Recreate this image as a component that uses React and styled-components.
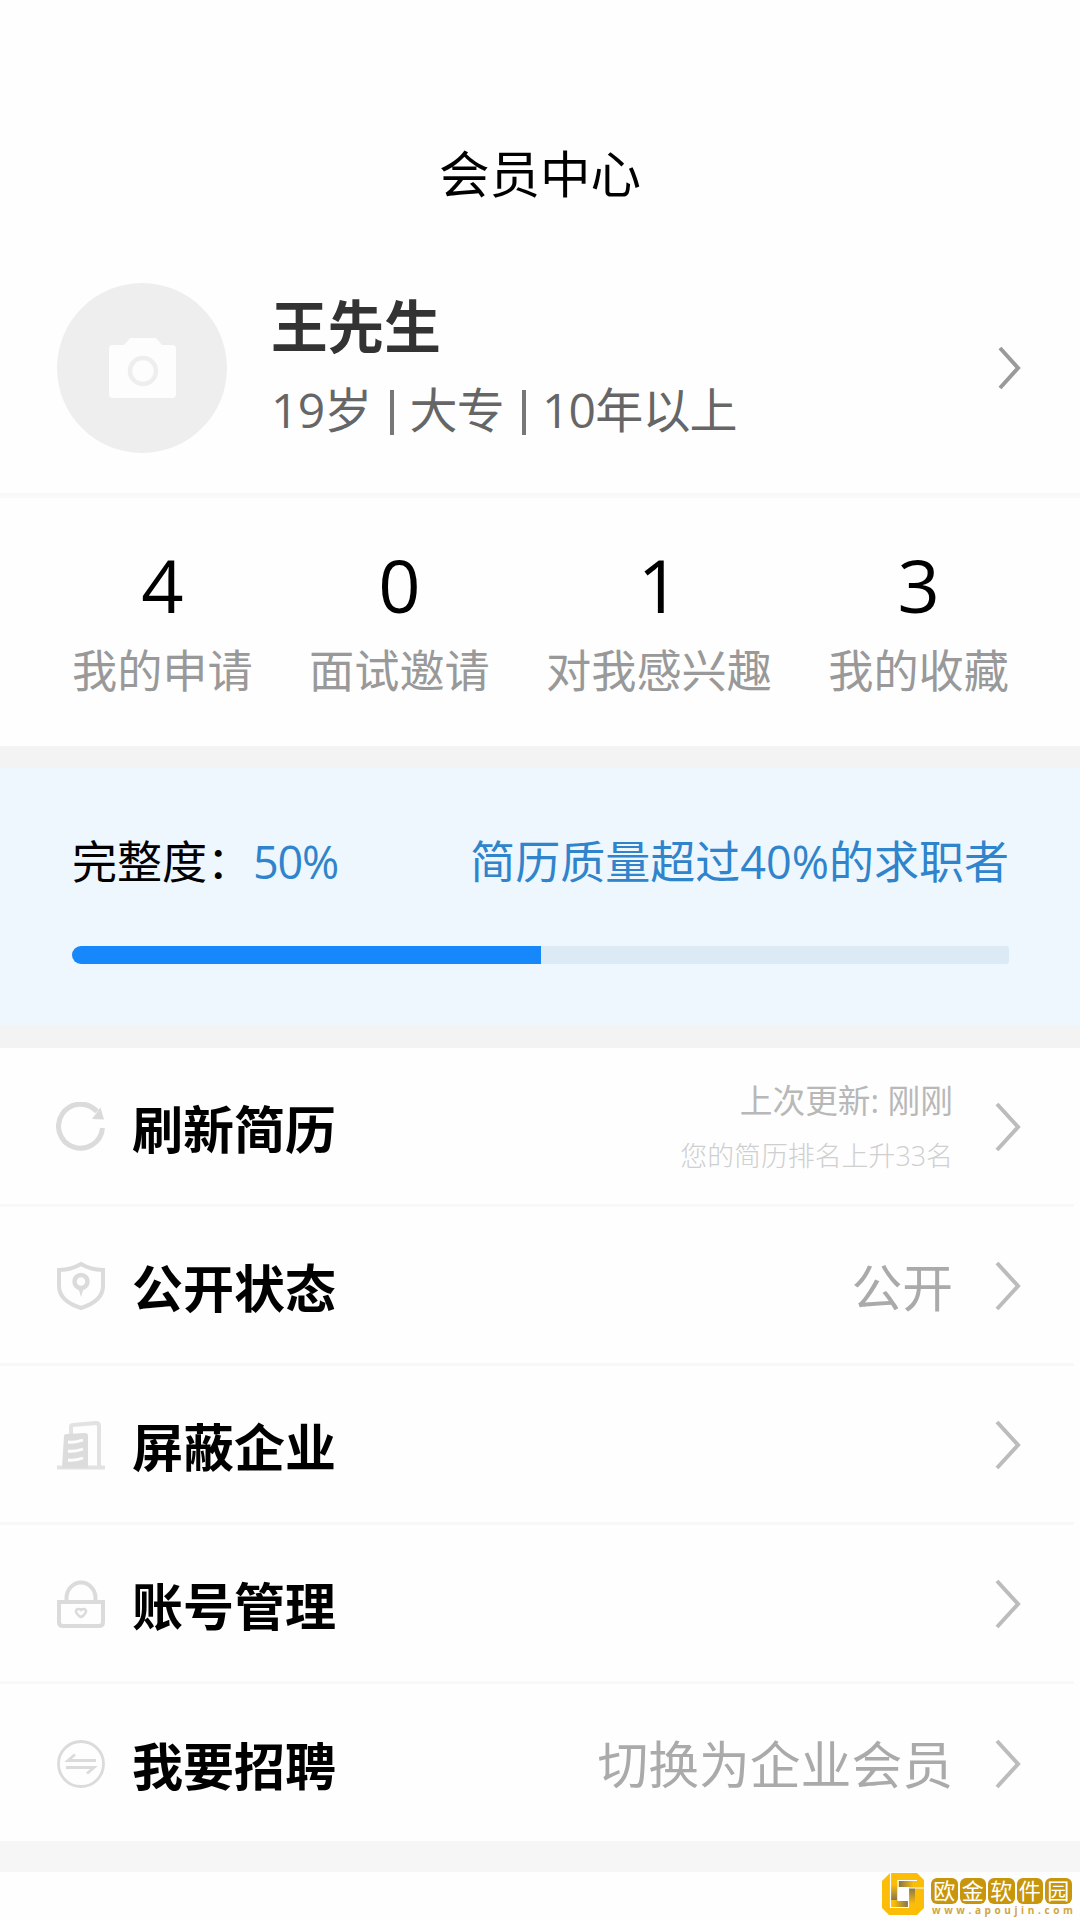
import React, { Component } from "react";
import styled, { createGlobalStyle } from "styled-components";

const GlobalStyle = createGlobalStyle`
  body {
    margin: 0;
    background: #fefefe;
    font-family: "Open Sans", "Noto Sans CJK SC", sans-serif;
  }
`;

const Page = styled.div`
  position: relative;
  width: 1080px;
  height: 1920px;
  overflow: hidden;
  color: #000;
`;

const Header = styled.h1`
  margin: 0;
  padding: 142px 0 0;
  height: 64px;
  line-height: 64px;
  font-size: 50.5px;
  font-weight: 400;
  text-align: center;
`;

const Profile = styled.div`
  display: flex;
  align-items: center;
  height: 170px;
  padding: 77px 59px 40px 57px;
  border-bottom: 5px solid #f9f9f9;
`;

const Avatar = styled.div`
  display: flex;
  width: 170px;
  height: 170px;
  border-radius: 50%;
  background: #eeeeee;
`;

const Info = styled.div`
  flex: 1;
  margin-left: 44px;
  h2 {
    margin: 0 0 23px;
    color: #333;
    font-size: 56.6px;
    font-weight: 700;
    line-height: 60px;
  }
`;

const Facts = styled.div`
  display: flex;
  color: #666;
  font-size: 48px;
  line-height: 60px;
  letter-spacing: -0.8px;
  span + span::before {
    content: "";
    display: inline-block;
    width: 4px;
    height: 45px;
    margin: 0 16px 0 18px;
    vertical-align: -7px;
    background: #777;
  }
`;

const Stats = styled.div`
  display: flex;
  justify-content: space-between;
  height: 198px;
  padding: 50px 71px 0 72px;
`;

const Stat = styled.div`
  text-align: center;
  strong {
    display: block;
    font-size: 74px;
    font-weight: 400;
    line-height: 74px;
  }
  span {
    display: block;
    margin-top: 24px;
    color: #999;
    font-size: 45.2px;
    line-height: 50px;
  }
`;

const Band = styled.div`
  height: ${props => props.$height}px;
  background: ${props => props.$color || "#f3f3f3"};
`;

const Resume = styled.div`
  height: 257px;
  box-sizing: border-box;
  padding: 69px 71px 0 72px;
  background: #eef6fe;
`;

const ResumeText = styled.div`
  display: flex;
  justify-content: space-between;
  font-size: 45px;
  line-height: 50px;
  b {
    margin-left: 1px;
    font-weight: 400;
    letter-spacing: -1.3px;
  }
  b, em {
    color: #2f84cb;
    font-style: normal;
  }
`;

const Track = styled.div`
  height: 18px;
  margin-top: 59px;
  border-radius: 9px 3px 3px 9px;
  background: #dceaf6;
  overflow: hidden;
`;

const Bar = styled.div`
  height: 100%;
  background: #1688fb;
`;

const Row = styled.div`
  display: flex;
  align-items: center;
  box-sizing: border-box;
  height: ${props => (props.$last ? 157 : 159)}px;
  width: ${props => (props.$last ? 1080 : 1074)}px;
  padding: 2px ${props => (props.$last ? 59 : 53)}px 0 56px;
  border-bottom: ${props => (props.$last ? "none" : "3px solid #f8f8f8")};
  h3 {
    flex: 1;
    margin: 0 0 0 26px;
    padding-top: 4px;
    font-size: 51px;
    font-weight: 700;
    line-height: 60px;
  }
`;

const RowValue = styled.span`
  margin-right: 42px;
  padding-top: 3px;
  color: #aaa;
  font-size: 50.8px;
  line-height: 60px;
`;

const Update = styled.div`
  margin-right: 42px;
  text-align: right;
  color: #b8b8b8;
  font-size: 32.7px;
  line-height: 44px;
  small {
    display: block;
    margin-top: 13px;
    color: #cfcfcf;
    font-size: 26.9px;
    font-weight: 300;
    line-height: 40px;
  }
`;

const Watermark = styled.div`
  position: absolute;
  left: 882px;
  top: 1873px;
  display: flex;
  gap: 6px;
`;

const Tiles = styled.div`
  display: flex;
  gap: 2px;
  margin-top: 5px;
  span {
    width: 26.5px;
    height: 26px;
    border-radius: 6px;
    background: #c8960c;
    color: #fff;
    font-size: 22px;
    font-weight: 400;
    line-height: 25px;
    text-align: center;
  }
`;

const Site = styled.div`
  padding-left: 1px;
  color: #d2a53c;
  font-size: 10px;
  font-weight: 700;
  line-height: 12px;
  letter-spacing: 3.6px;
`;

const Chevron = ({ small }) => (
  <svg width="26" height="50" viewBox="0 0 26 50" fill="none" stroke={small ? "#9a9a9a" : "#bcbcbc"} strokeWidth="4">
    <path d={small ? "M5 5 23 25 5 45" : "M2 2 23 25 2 48"} />
  </svg>
);

const Camera = () => (
  <svg width="170" height="170" viewBox="0 0 170 170">
    <path d="M55 62h12l6-7h26l6 7h10q4 0 4 4v45q0 4-4 4H56q-4 0-4-4V66q0-4 3-4z" fill="#fdfdfd" />
    <circle cx="86" cy="88" r="13" fill="none" stroke="#eee" strokeWidth="4.5" />
  </svg>
);

const icons = {
  refresh: (
    <g strokeWidth="5">
      <path d="M46.5 26A22 22 0 1 1 41 9.500" />
      <path d="M44.500 5.500 48 17.500 36 17z" fill="#d9dbdb" stroke="none" />
    </g>
  ),
  shield: (
    <g strokeWidth="4">
      <path d="M25 3Q15 9 3 9v16q0 15 22 22 22-7 22-22V9Q35 9 25 3z" />
      <circle cx="25" cy="20.500" r="6.500" strokeWidth="4.500" />
      <path d="M22 26h6l-3 10z" fill="#dadbdb" stroke="none" />
    </g>
  ),
  building: (
    <g stroke="#e2e2e2" strokeWidth="4">
      <path d="M15 14V7q0-2 2-2l23-2q3 0 3 3v41" />
      <path d="M1 47.500h48" />
      <path d="M8 16q0-2 3-2l18-1q3 0 3 3v32H6z" fill="#dcdcdc" stroke="none" />
      <path d="M12 22q7 1 15-2M12 31q7 1 15-2M12 40q7 1 15-2" stroke="#fefefe" strokeWidth="2.800" />
    </g>
  ),
  lock: (
    <g strokeWidth="4">
      <path d="M3 23h44v20q0 4-4 4H7q-4 0-4-4z" />
      <path d="M10.500 23v-4a14.500 15.500 0 0 1 29 0v4" />
      <path d="M25 38.500q-5-4-5-6 0-2.500 2.500-2.500 1.500 0 2.500 1 1-1 2.500-1 2.500 0 2.500 2.500 0 2-5 6" strokeWidth="2.600" />
    </g>
  ),
  swap: (
    <g strokeWidth="2.800">
      <circle cx="25" cy="25" r="22.500" />
      <path d="M40 21.500H12l7-6M10 28.500h28l-7 6" />
    </g>
  )
};

const RowIcon = ({ name }) => (
  <svg width="50" height="50" viewBox="0 0 50 50" fill="none" stroke="#dadbdb">
    {icons[name]}
  </svg>
);

const Logo = () => (
  <svg width="43" height="43" viewBox="0 0 43 43">
    <defs>
      <linearGradient id="right">
        <stop offset="0" stopColor="#86754d" />
        <stop offset="0.8" stopColor="#fbbd08" />
      </linearGradient>
      <linearGradient id="left">
        <stop offset="0.2" stopColor="#fbbd08" />
        <stop offset="1" stopColor="#86754d" />
      </linearGradient>
      <linearGradient id="down" x2="0" y2="1">
        <stop offset="0" stopColor="#86754d" />
        <stop offset="0.8" stopColor="#fbbd08" />
      </linearGradient>
      <linearGradient id="up" x2="0" y2="1">
        <stop offset="0.2" stopColor="#fbbd08" />
        <stop offset="1" stopColor="#86754d" />
      </linearGradient>
    </defs>
    <path d="M8 0h27l7 7v28l-7 7H7l-7-7V8z" fill="#fbbd08" />
    <path d="M16 14h11v14H16z" fill="#fff" />
    <path d="M17 8h18v6H17z" fill="url(#right)" />
    <path d="M8 28h18v6H8z" fill="url(#left)" />
    <path d="M9 8h6v19H9z" fill="url(#up)" />
    <path d="M27 15h6v20h-6z" fill="url(#down)" />
    <path d="M8.500 0v34.500H26.500V15H42M42 15H27M16 27.500V7.500H35" fill="none" stroke="#fff" strokeWidth="1.200" />
  </svg>
);

const stats = [
  { count: 4, label: "我的申请" },
  { count: 0, label: "面试邀请" },
  { count: 1, label: "对我感兴趣" },
  { count: 3, label: "我的收藏" }
];

const rows = [
  { icon: "refresh", title: "刷新简历", updated: "上次更新: 刚刚", rank: "您的简历排名上升33名" },
  { icon: "shield", title: "公开状态", value: "公开" },
  { icon: "building", title: "屏蔽企业" },
  { icon: "lock", title: "账号管理" },
  { icon: "swap", title: "我要招聘", value: "切换为企业会员" }
];

class App extends Component {
  state = {
    progress: 50
  }

  render() {
    const { progress } = this.state;
    return (
      <Page>
        <GlobalStyle />
        <Header>会员中心</Header>
        <Profile>
          <Avatar><Camera /></Avatar>
          <Info>
            <h2>王先生</h2>
            <Facts>
              <span>19岁</span>
              <span>大专</span>
              <span>10年以上</span>
            </Facts>
          </Info>
          <Chevron small />
        </Profile>

        <Stats>
          {stats.map(stat => (
            <Stat key={stat.label}>
              <strong>{stat.count}</strong>
              <span>{stat.label}</span>
            </Stat>
          ))}
        </Stats>

        <Band $height={22} />
        <Resume>
          <ResumeText>
            <span>完整度：<b>{progress}%</b></span>
            <em>简历质量超过40%的求职者</em>
          </ResumeText>
          <Track>
            <Bar style={{ width: `${progress}%` }} />
          </Track>
        </Resume>
        <Band $height={23} />

        {rows.map((row, i) => (
          <Row key={row.icon} $last={i === rows.length - 1}>
            <RowIcon name={row.icon} />
            <h3>{row.title}</h3>
            {row.value && <RowValue>{row.value}</RowValue>}
            {row.updated && (
              <Update>
                {row.updated}
                <small>{row.rank}</small>
              </Update>
            )}
            <Chevron />
          </Row>
        ))}
        <Band $height={31} $color="#f6f6f6" />

        <Watermark>
          <Logo />
          <div>
            <Tiles>
              {"欧金软件园".split("").map(char => <span key={char}>{char}</span>)}
            </Tiles>
            <Site>www.apoujin.com</Site>
          </div>
        </Watermark>
      </Page>
    );
  }
}

export default App;
